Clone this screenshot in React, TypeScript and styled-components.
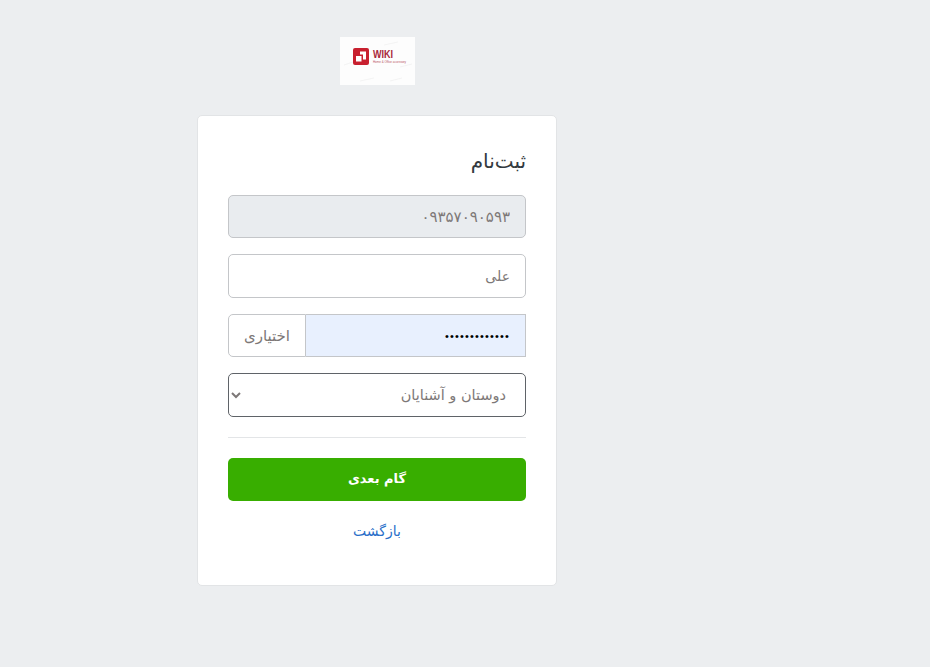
import React from "react";
import styled, { createGlobalStyle } from "styled-components";

const fontStack = `"DejaVu Sans", "Noto Sans", sans-serif`;

const GlobalStyle = createGlobalStyle`
  html, body {
    margin: 0;
    padding: 0;
    background: #eceef0;
    font-family: ${fontStack};
  }
  * { box-sizing: border-box; }
`;

const Page = styled.div`
  width: 930px;
  height: 667px;
  overflow: hidden;
  padding: 37px 0 0 197px;
`;

const Column = styled.div`
  width: 360px;
  display: flex;
  flex-direction: column;
  align-items: center;
  gap: 30px;
`;

const Logo = styled.svg`
  display: block;
  width: 75px;
  height: 48px;
`;

const Card = styled.form`
  width: 100%;
  height: 471px;
  background: #fff;
  border: 1px solid #e2e4e6;
  border-radius: 5px;
  padding: 30px;
  display: flex;
  flex-direction: column;
  direction: rtl;
`;

const Title = styled.h1`
  margin: 0 0 19px;
  font-size: 20px;
  line-height: 30px;
  font-weight: 500;
  color: #343a40;
`;

const TextInput = styled.input<{ $disabled?: boolean }>`
  display: block;
  width: 100%;
  height: 43px;
  margin-bottom: 16px;
  padding: 0 15px;
  font-family: ${fontStack};
  font-size: 15px;
  color: #7d7877;
  text-align: right;
  direction: rtl;
  background: ${(p) => (p.$disabled ? "#e9ecef" : "#fff")};
  border: 1px solid #c4c6c9;
  border-radius: 5px;
  outline: none;
`;

const NameInput = styled(TextInput)`
  height: 44px;
  font-size: 14px;
`;

const InputGroup = styled.div`
  display: flex;
  height: 43px;
  margin-bottom: 16px;
`;

const PasswordInput = styled.input`
  flex: 1;
  min-width: 0;
  height: 100%;
  padding: 0 15px;
  font-family: "Liberation Sans", sans-serif;
  font-size: 11px;
  letter-spacing: 1.15px;
  color: #000;
  direction: rtl;
  background: #e8f0fe;
  border: 1px solid #c4c6c9;
  border-left: 0;
  border-radius: 0;
  outline: none;
`;

const Addon = styled.span`
  width: 78px;
  display: flex;
  align-items: center;
  justify-content: center;
  font-size: 15px;
  color: #7d7877;
  background: #fff;
  border: 1px solid #c4c6c9;
  border-radius: 5px 0 0 5px;
`;

const Select = styled.select`
  display: block;
  width: 100%;
  height: 44px;
  padding: 0 15px 0 8px;
  font-family: ${fontStack};
  font-size: 14.5px;
  color: #7d7877;
  direction: rtl;
  background: #fff;
  border: 1px solid #5f6368;
  border-radius: 5px;
  outline: none;
`;

const Divider = styled.hr`
  width: 100%;
  margin: 20px 0;
  border: 0;
  border-top: 1px solid #e3e5e7;
`;

const NextButton = styled.button`
  width: 100%;
  height: 43px;
  padding: 0 0 2px;
  font-family: ${fontStack};
  font-size: 13px;
  font-weight: 700;
  color: #fff;
  background: #38ae00;
  border: 0;
  border-radius: 5px;
`;

const BackLink = styled.a`
  margin-top: 19px;
  text-align: center;
  font-size: 14px;
  line-height: 22px;
  color: #2a6fc9;
  text-decoration: none;
`;

const App: React.FC = () => {
  return (
    <Page>
      <GlobalStyle />
      <Column>
        <Logo viewBox="0 0 75 48" role="img" aria-label="Wiki">
          <rect width="75" height="48" fill="#fdfdfd" />
          <path d="M4 28l12-4M44 8l14-3M60 30l12-3M20 44l14-3M50 44l12-3" stroke="#efefef" strokeWidth="0.7" />
          <rect x="13" y="11" width="16" height="17" rx="2" fill="#c8202f" />
          <path d="M20 14.5h6v8h-3v-5h-3z" fill="#fff" />
          <rect x="16" y="19" width="5.5" height="5.5" fill="#fff" />
          <text
            x="33"
            y="21"
            fontFamily="Liberation Sans, sans-serif"
            fontSize="11"
            fontWeight="700"
            fill="#a8283a"
            textLength="20"
            lengthAdjust="spacingAndGlyphs"
          >
            WIKI
          </text>
          <text
            x="33"
            y="26"
            fontFamily="Liberation Sans, sans-serif"
            fontSize="3.2"
            fill="#b8505e"
            textLength="33"
            lengthAdjust="spacingAndGlyphs"
          >
            Home & Office accessory
          </text>
        </Logo>
        <Card>
          <Title>ثبت‌نام</Title>
          <TextInput $disabled readOnly value="۰۹۳۵۷۰۹۰۵۹۳" />
          <NameInput readOnly value="علی" />
          <InputGroup>
            <PasswordInput type="password" readOnly value="1234567890123" />
            <Addon>اختیاری</Addon>
          </InputGroup>
          <Select defaultValue="friends">
            <option value="friends">دوستان و آشنایان</option>
          </Select>
          <Divider />
          <NextButton type="button">گام بعدی</NextButton>
          <BackLink href="#">بازگشت</BackLink>
        </Card>
      </Column>
    </Page>
  );
};

export default App;
